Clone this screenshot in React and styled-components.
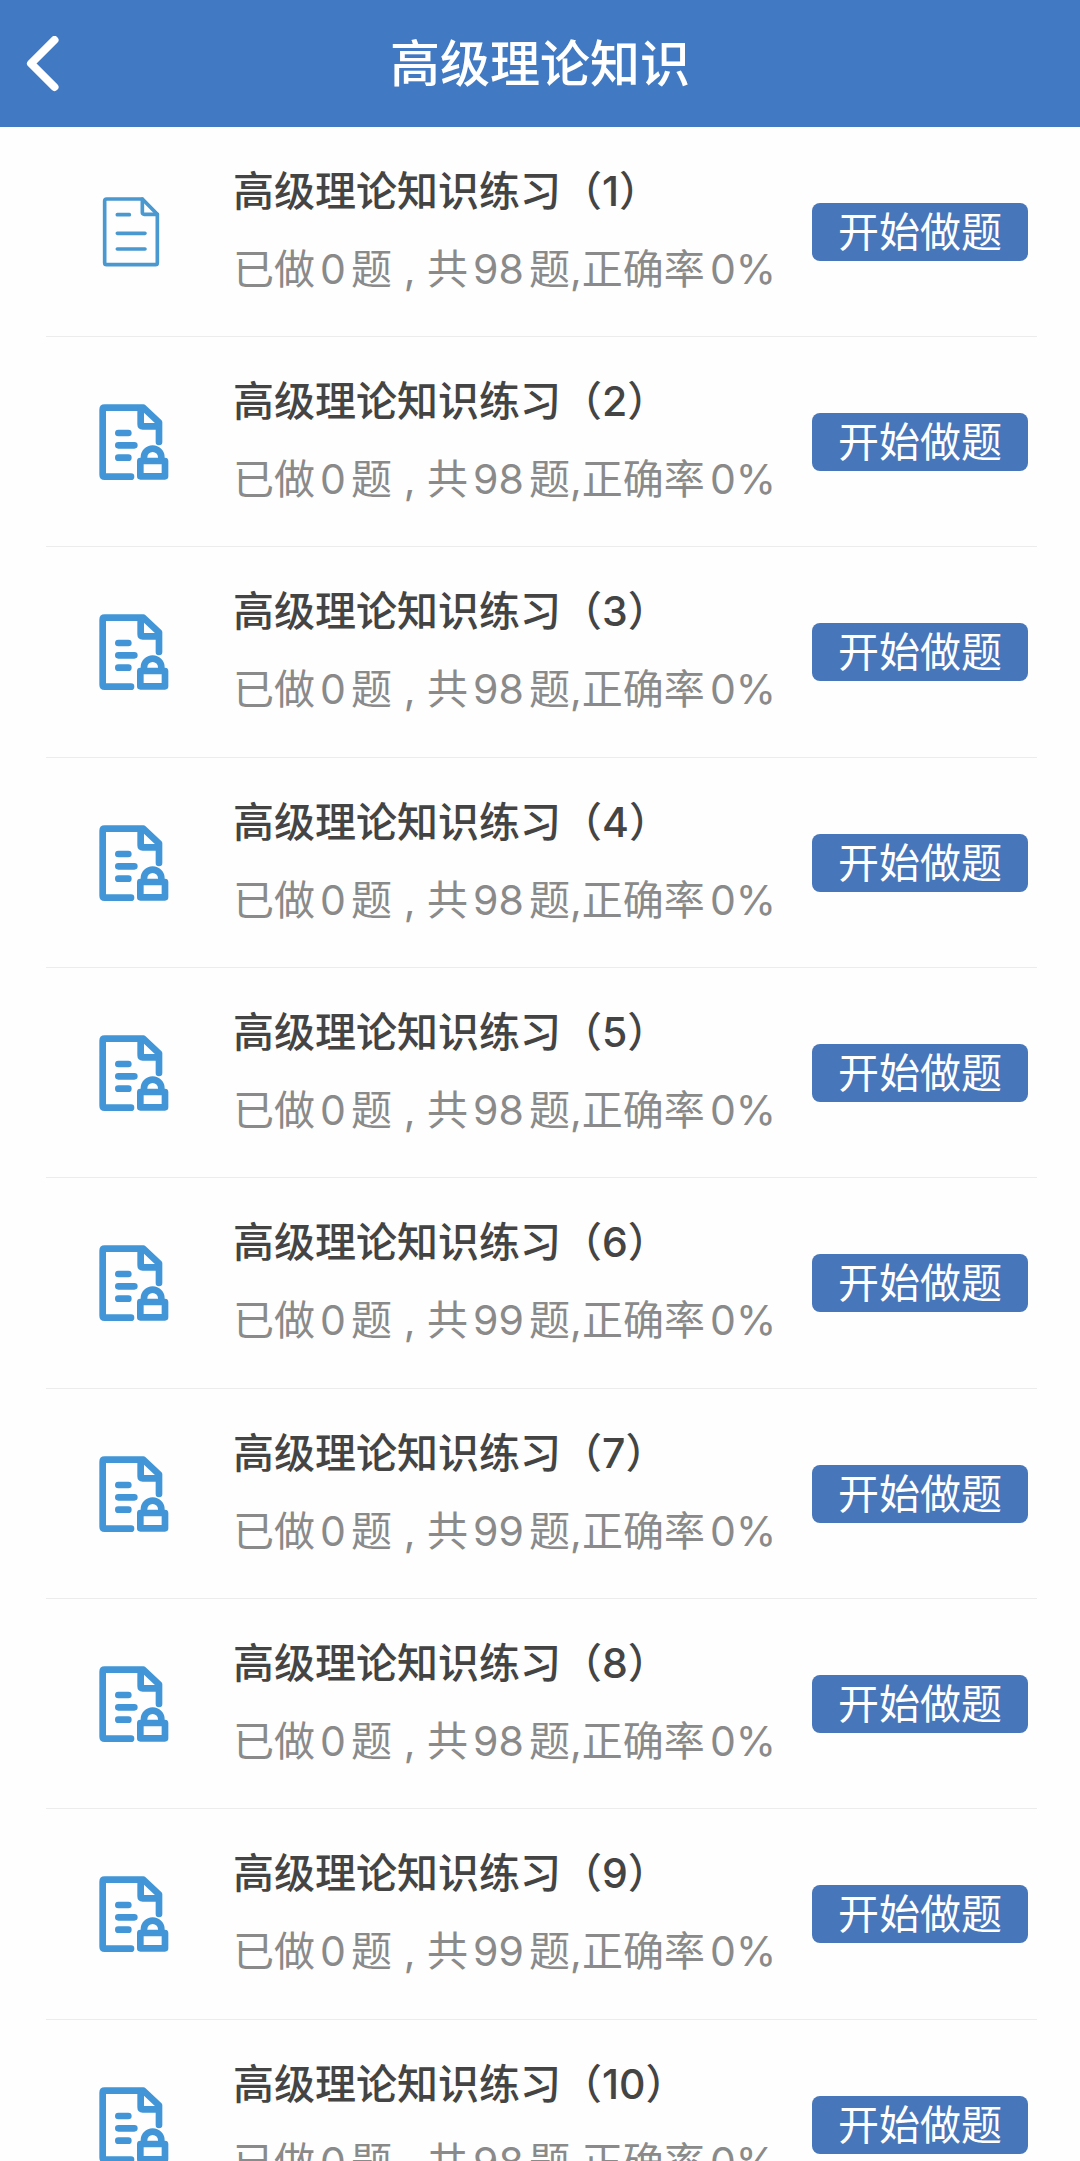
import React from "react";
import styled, { createGlobalStyle } from "styled-components";

const GlobalStyle = createGlobalStyle`
  body {
    margin: 0;
    background-color: #fefefe;
    font-family: Inter, "Noto Sans CJK SC", sans-serif;
    text-autospace: normal;
  }
`;

const Header = styled.header`
  display: grid;
  grid-template-columns: 100px 1fr 100px;
  align-items: center;
  height: 127px;
  background-color: #417ac3;
`;

const BackButton = styled.button`
  display: flex;
  align-items: center;
  height: 100%;
  padding: 0 0 0 24px;
  border: none;
  background: none;
  cursor: pointer;
`;

const PageTitle = styled.h1`
  margin: 0;
  font-size: 50px;
  line-height: 72px;
  font-weight: 500;
  text-align: center;
  color: #ffffff;
`;

const List = styled.ul`
  display: grid;
  grid-auto-rows: minmax(210px, auto) minmax(210px, auto) minmax(211px, auto);
  margin: 0;
  padding: 0 43px 0 46px;
  list-style: none;
`;

const Row = styled.li`
  display: grid;
  grid-template-columns: 170px 1fr auto;
  align-items: center;
  column-gap: 17px;
  padding-right: 9px;
  border-bottom: 1px solid #ececec;
`;

const IconBox = styled.div`
  display: flex;
  justify-content: center;
`;

const Info = styled.div`
  display: flex;
  flex-direction: column;
  padding-bottom: 4px;
`;

const Name = styled.h2`
  margin: 0;
  font-size: 41px;
  line-height: 78px;
  font-weight: 500;
  color: #444444;
`;

const Progress = styled.p`
  margin: 0;
  font-size: 41px;
  line-height: 78px;
  white-space: nowrap;
  color: #8a8a8a;
`;

const StartButton = styled.button`
  width: 216px;
  height: 58px;
  padding: 0;
  border: none;
  border-radius: 8px;
  background-color: #4776bb;
  font-family: inherit;
  font-size: 41px;
  line-height: 58px;
  color: #ffffff;
  cursor: pointer;
`;

const BackIcon = () => (
  <svg width="36" height="56" viewBox="0 0 36 56" aria-hidden="true">
    <path
      d="M30.5 4 L7 27.5 L30.5 51"
      fill="none"
      stroke="#ffffff"
      strokeWidth="8"
      strokeLinecap="round"
      strokeLinejoin="round"
    />
  </svg>
);

const DocIcon = () => (
  <svg width="76" height="78" viewBox="39 40 228 234" aria-hidden="true">
    <g
      fill="none"
      stroke="#4a98d0"
      strokeWidth="11"
      strokeLinecap="round"
      strokeLinejoin="round"
    >
      <path d="M187 58 H80 q-6 0 -6 6 V249 q0 6 6 6 H226 q6 0 6 -6 V104 Z" />
      <path d="M187 58 V98 q0 6 6 6 H232" />
      <path d="M112 105 H148 M112 161 H195 M112 208 H195" />
    </g>
  </svg>
);

const LockedDocIcon = () => (
  <svg width="76" height="78" viewBox="39 40 228 234" aria-hidden="true">
    <g
      fill="none"
      stroke="#4296d7"
      strokeWidth="20"
      strokeLinecap="round"
      strokeLinejoin="round"
    >
      <path d="M153 261 H74 q-6 0 -6 -6 V60 q0 -6 6 -6 H190 L237 98 V157" />
      <path d="M182 56 V104 q0 6 6 6 H235" />
      <path d="M115 130 H145 M115 167 H163 M115 204 H145" />
      <path d="M192 212 V203 a26 26 0 0 1 52 0 V212" />
      <rect x="181" y="214" width="74" height="46" />
    </g>
  </svg>
);

const exercises = [
  { id: 1, total: 98, locked: false },
  { id: 2, total: 98, locked: true },
  { id: 3, total: 98, locked: true },
  { id: 4, total: 98, locked: true },
  { id: 5, total: 98, locked: true },
  { id: 6, total: 99, locked: true },
  { id: 7, total: 99, locked: true },
  { id: 8, total: 98, locked: true },
  { id: 9, total: 99, locked: true },
  { id: 10, total: 98, locked: true },
];

const App = () => {
  return (
    <>
      <GlobalStyle />
      <Header>
        <BackButton type="button" aria-label="返回">
          <BackIcon />
        </BackButton>
        <PageTitle>高级理论知识</PageTitle>
      </Header>
      <List>
        {exercises.map(({ id, total, locked }) => (
          <Row key={id}>
            <IconBox>{locked ? <LockedDocIcon /> : <DocIcon />}</IconBox>
            <Info>
              <Name>{`高级理论知识练习（${id}）`}</Name>
              <Progress>{`已做0题 , 共${total}题,正确率0%`}</Progress>
            </Info>
            <StartButton type="button">开始做题</StartButton>
          </Row>
        ))}
      </List>
    </>
  );
};

export default App;
